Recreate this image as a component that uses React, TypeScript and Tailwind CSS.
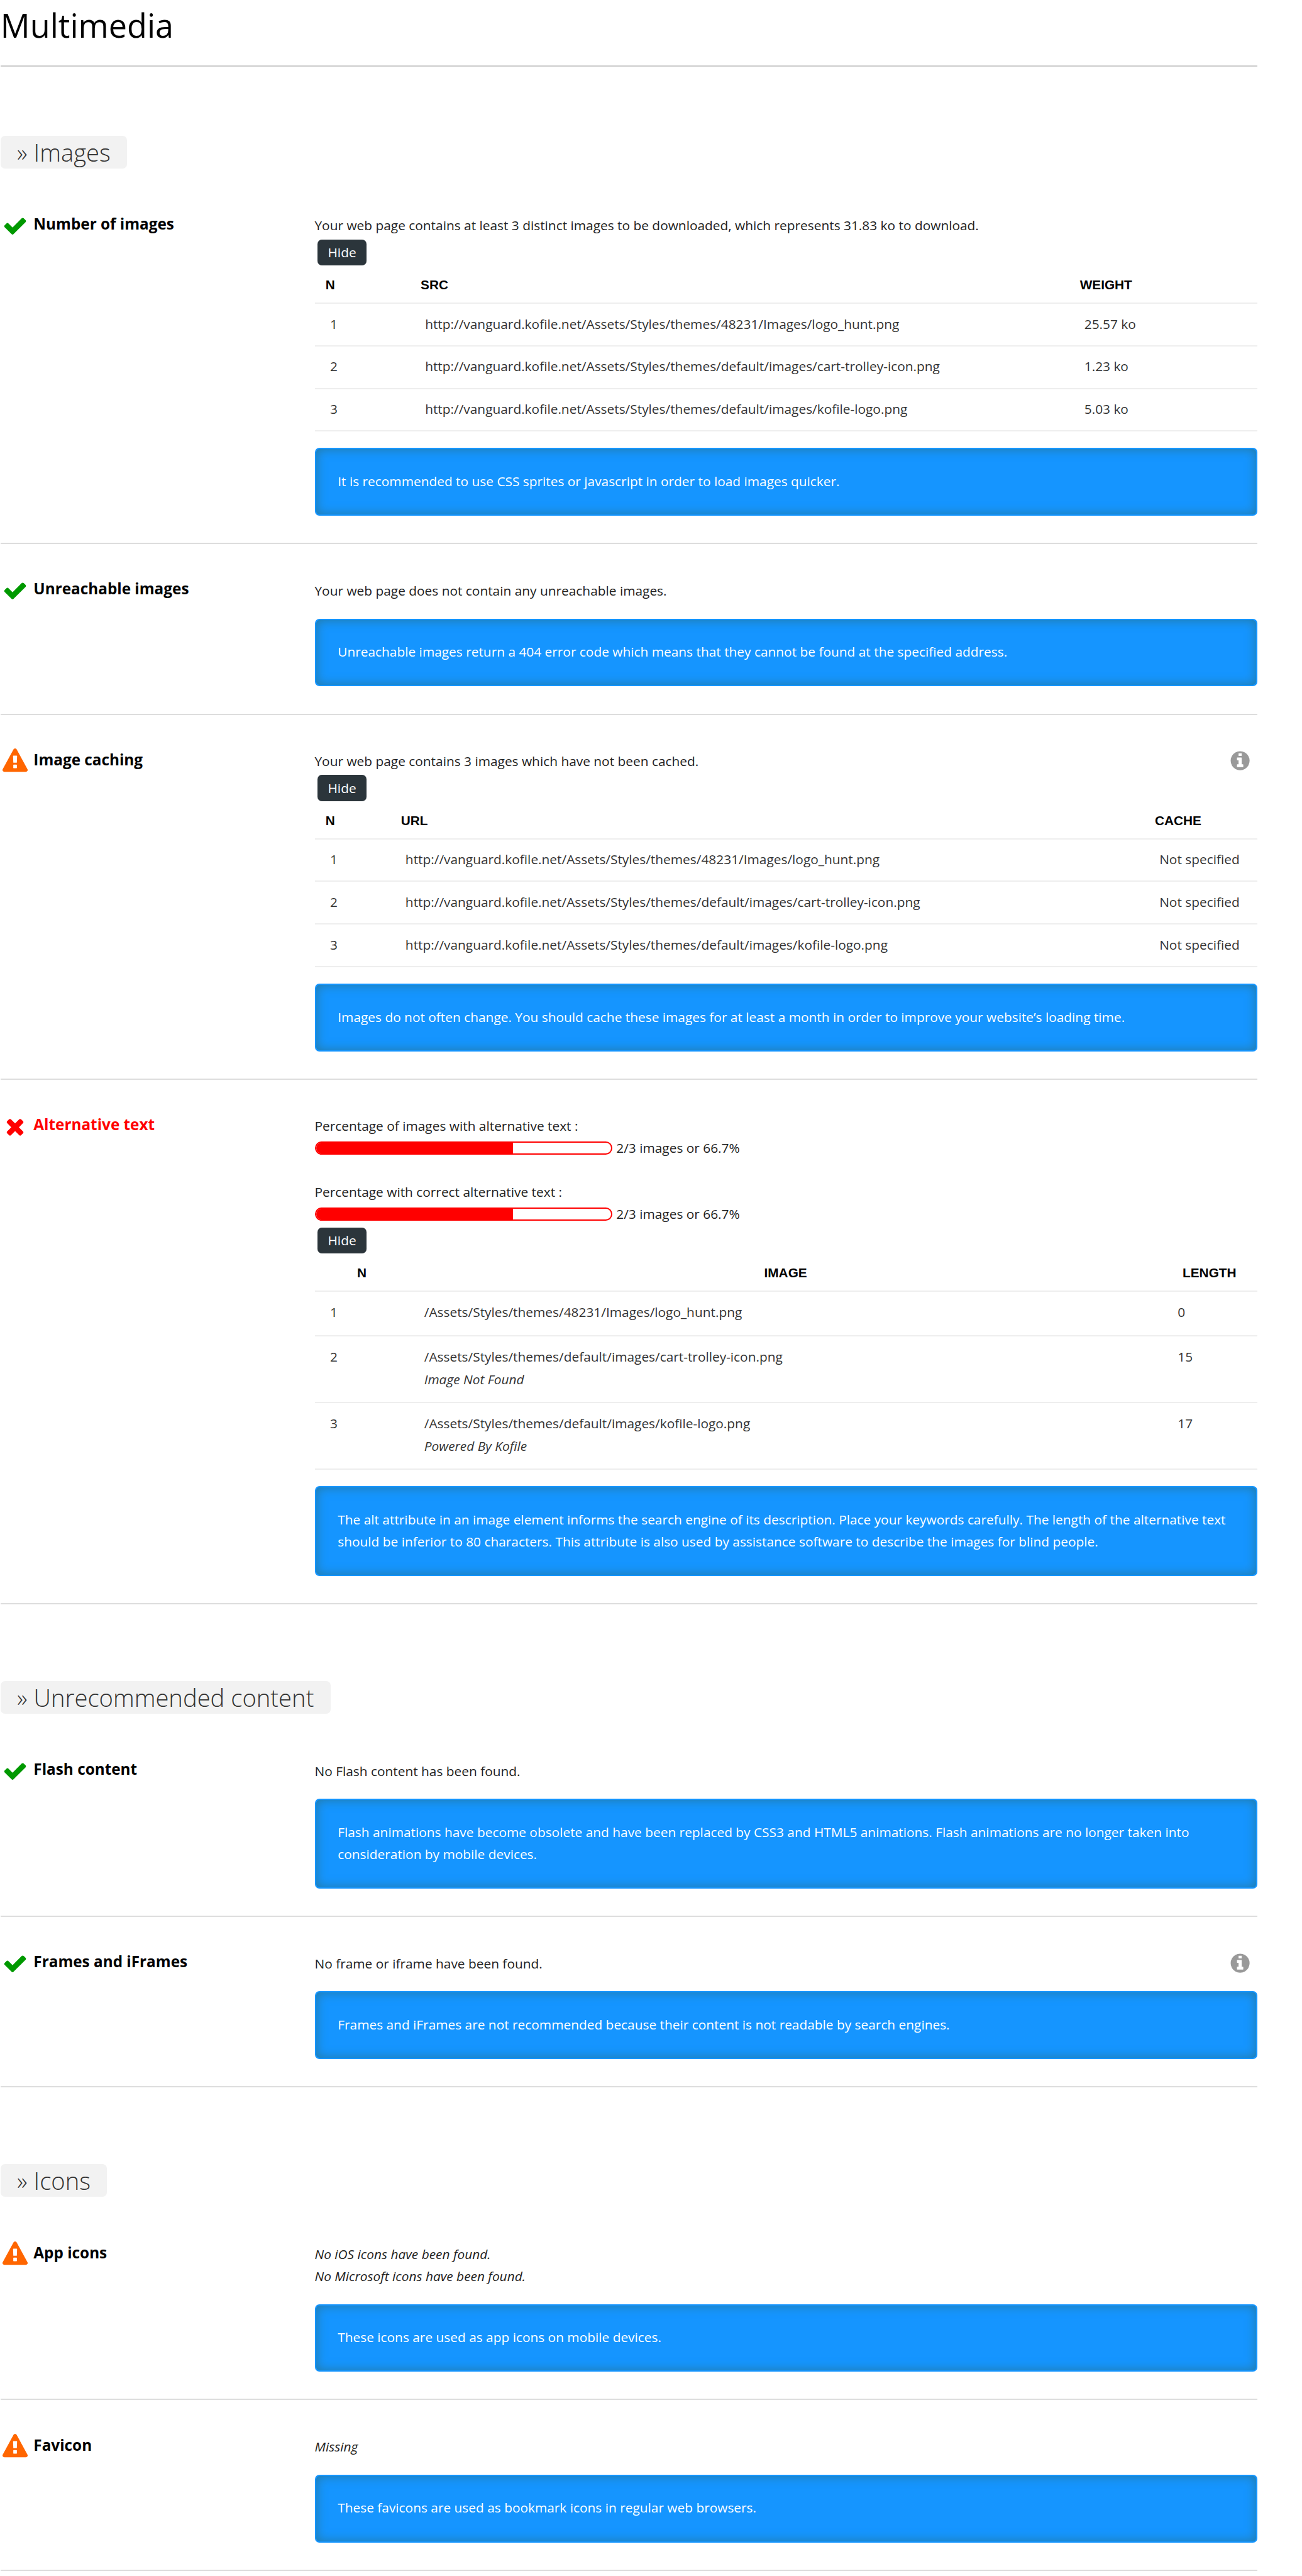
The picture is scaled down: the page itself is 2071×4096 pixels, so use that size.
import React from "react";

type Status = "ok" | "warn" | "bad";

const CHECK =
  "M1671 566q0 40-28 68l-724 724-136 136q-28 28-68 28t-68-28l-136-136-362-362q-28-28-28-68t28-68l136-136q28-28 68-28t68 28l294 295 656-657q28-28 68-28t68 28l136 136q28 28 28 68z";
const CROSS =
  "M1490 1322q0 40-28 68l-136 136q-28 28-68 28t-68-28l-294-294-294 294q-28 28-68 28t-68-28l-136-136q-28-28-28-68t28-68l294-294-294-294q-28-28-28-68t28-68l136-136q28-28 68-28t68 28l294 294 294-294q28-28 68-28t68 28l136 136q28 28 28 68t-28 68l-294 294 294 294q28 28 28 68z";
const WARNING =
  "M1024 1375v-190q0-14-9.5-23.5t-22.5-9.5h-192q-13 0-22.5 9.5t-9.5 23.5v190q0 14 9.5 23.5t22.5 9.5h192q13 0 22.5-9.5t9.5-23.5zm-2-374l18-459q0-12-10-19-13-11-24-11h-220q-11 0-24 11-10 7-10 21l17 457q0 10 10 16.5t24 6.5h185q14 0 23.5-6.5t10.5-16.5zm-14-934l768 1408q35 63-2 126-17 29-46.5 46t-63.5 17h-1536q-34 0-63.5-17t-46.5-46q-37-63-2-126l768-1408q17-31 47-49t65-18 65 18 47 49z";
const INFO =
  "M1152 1376v-160q0-14-9-23t-23-9h-96v-512q0-14-9-23t-23-9h-320q-14 0-23 9t-9 23v160q0 14 9 23t23 9h96v320h-96q-14 0-23 9t-9 23v160q0 14 9 23t23 9h448q14 0 23-9t9-23zm-128-896v-160q0-14-9-23t-23-9h-192q-14 0-23 9t-9 23v160q0 14 9 23t23 9h192q14 0 23-9t9-23zm640 416q0 209-103 385.5t-279.5 279.5-385.5 103-385.5-103-279.5-279.5-103-385.5 103-385.5 279.5-279.5 385.5-103 385.5 103 279.5 279.5 103 385.5z";

const STATUS: Record<Status, { path: string; color: string; label: string }> = {
  ok: { path: CHECK, color: "text-[#090]", label: "text-black" },
  warn: { path: WARNING, color: "text-[#f60]", label: "text-black" },
  bad: { path: CROSS, color: "text-[#f00]", label: "text-[#f00]" },
};

function Icon({ path, className }: { path: string; className: string }) {
  return (
    <svg viewBox="0 0 1792 1792" fill="currentColor" className={className}>
      <path d={path} />
    </svg>
  );
}

function SectionTitle({ children }: { children: React.ReactNode }) {
  return (
    <h2 className="mb-[17.4px] flex h-[52.1px] w-fit items-center rounded-[7px] bg-[#f2f2f2] px-[26.2px] text-[38.2px] font-light leading-[52px] text-[#333]">
      {children}
    </h2>
  );
}

function Tip({ children }: { children: React.ReactNode }) {
  return (
    <div className="rounded-[7px] border-2 border-[#1595ff] bg-[#1595ff] pb-[35.5px] pl-[33.8px] pr-[34.5px] pt-[33.5px] text-white shadow-[inset_0_0_17px_rgb(36,121,161)]">
      {children}
    </div>
  );
}

function Item({
  status,
  label,
  info = false,
  children,
}: {
  status: Status;
  label: string;
  info?: boolean;
  children: React.ReactNode;
}) {
  const s = STATUS[status];
  return (
    <section className="flex border-b-2 border-[#ddd] pb-[43.2px]">
      <div className="flex w-[500.6px] shrink-0 items-start pl-[3.5px] pt-[53.6px]">
        <Icon path={s.path} className={"size-[40px] shrink-0 " + s.color} />
        <h3 className={"ml-[9px] mt-[-0.5px] text-[24.3px] font-bold leading-[36px] " + s.label}>{label}</h3>
      </div>
      <div className="relative flex-1 pt-[56.5px]">
        {info && <Icon path={INFO} className="absolute right-[9.3px] top-[55.6px] size-[35.2px] text-[#999]" />}
        {children}
      </div>
    </section>
  );
}

function Summary({ italic = false, children }: { italic?: boolean; children: React.ReactNode }) {
  return <div className={italic ? "mb-[27px] -ml-px italic" : "mb-[27px] -ml-px"}>{children}</div>;
}

function Line({ children }: { children: React.ReactNode }) {
  return <p className="-ml-px">{children}</p>;
}

function HideButton() {
  return (
    <button className="ml-[3.5px] mt-[4.3px] flex h-[41.7px] w-[78.2px] items-center justify-center rounded-[7px] bg-[#2b353b] text-white">
      Hide
    </button>
  );
}

function Table({
  cols,
  head,
  rows,
  centered = false,
}: {
  cols: string;
  head: string[];
  rows: { cells: string[]; note?: string; height: string }[];
  centered?: boolean;
}) {
  return (
    <div className="mb-[26.1px] text-[#333]">
      <div
        className={
          "grid h-[60.8px] items-start border-b-2 border-[#eee] pt-[13.9px] font-['Liberation_Sans',Arial,sans-serif] text-[20.8px] font-bold text-black " +
          cols
        }
      >
        {head.map((h) => (
          <div key={h} className={centered ? "pr-[1.8px] text-center" : "pl-[16.4px]"}>
            {h}
          </div>
        ))}
      </div>
      {rows.map((r) => (
        <div key={r.cells[0]} className={"grid items-start border-b-2 border-[#eee] pt-[14.6px] " + cols + " " + r.height}>
          {r.cells.map((c, i) => (
            <div key={i} className="pl-[23.5px]">
              {c}
              {i === 1 && r.note && <div className="mt-[1.7px] italic">{r.note}</div>}
            </div>
          ))}
        </div>
      ))}
    </div>
  );
}

function Progress() {
  return (
    <div className="flex items-center">
      <div className="mt-[0.5px] h-[20.9px] w-[472.8px] overflow-hidden rounded-[10.4px] border-2 border-[#f00]">
        <div className="h-full w-[66.7%] bg-[#f00]" />
      </div>
      <span className="ml-[6px]">2/3 images or 66.7%</span>
    </div>
  );
}

const BASE = "http://vanguard.kofile.net";
const IMAGES = [
  "/Assets/Styles/themes/48231/Images/logo_hunt.png",
  "/Assets/Styles/themes/default/images/cart-trolley-icon.png",
  "/Assets/Styles/themes/default/images/kofile-logo.png",
];
const WEIGHTS = ["25.57 ko", "1.23 ko", "5.03 ko"];
const LENGTHS = ["0", "15", "17"];
const NOTES = [undefined, "Image Not Found", "Powered By Kofile"];
const ROW = "h-[67.78px]";

export default function App() {
  return (
    <main className="h-[4096px] w-[2071px] overflow-hidden bg-white font-['Open_Sans',sans-serif] text-[20.86px] leading-[34.76px] text-[#222]">
      <div className="ml-[0.87px] w-[1998.8px]">
        <h1 className="flex h-[106px] items-start border-b-2 border-[#ccc] pt-[3.8px] text-[52.1px] leading-[71px] text-black">
          Multimedia
        </h1>

        <div className="mt-[109.5px]">
          <SectionTitle>» Images</SectionTitle>
          <Item status="ok" label="Number of images">
            <Line>
              Your web page contains at least 3 distinct images to be downloaded, which represents 31.83 ko to download.
            </Line>
            <HideButton />
            <Table
              cols="grid-cols-[151.2px_1048.6px_1fr]"
              head={["N", "SRC", "WEIGHT"]}
              rows={IMAGES.map((p, i) => ({ cells: [String(i + 1), BASE + p, WEIGHTS[i]], height: ROW }))}
            />
            <Tip>It is recommended to use CSS sprites or javascript in order to load images quicker.</Tip>
          </Item>
          <Item status="ok" label="Unreachable images">
            <Summary>Your web page does not contain any unreachable images.</Summary>
            <Tip>Unreachable images return a 404 error code which means that they cannot be found at the specified address.</Tip>
          </Item>
          <Item status="warn" label="Image caching" info>
            <Line>Your web page contains 3 images which have not been cached.</Line>
            <HideButton />
            <Table
              cols="grid-cols-[119.9px_1199.3px_1fr]"
              head={["N", "URL", "CACHE"]}
              rows={IMAGES.map((p, i) => ({ cells: [String(i + 1), BASE + p, "Not specified"], height: ROW }))}
            />
            <Tip>
              Images do not often change. You should cache these images for at least a month in order to improve your
              website’s loading time.
            </Tip>
          </Item>
          <Item status="bad" label="Alternative text">
            <Line>Percentage of images with alternative text :</Line>
            <Progress />
            <div className="mt-[34.76px]">
              <Line>Percentage with correct alternative text :</Line>
            </div>
            <Progress />
            <HideButton />
            <Table
              centered
              cols="grid-cols-[149.8px_1198.5px_1fr]"
              head={["N", "IMAGE", "LENGTH"]}
              rows={IMAGES.map((p, i) => ({
                cells: [String(i + 1), p, LENGTHS[i]],
                note: NOTES[i],
                height: i === 0 ? "h-[71.26px]" : "h-[106px]",
              }))}
            />
            <Tip>
              The alt attribute in an image element informs the search engine of its description. Place your keywords
              carefully. The length of the alternative text should be inferior to 80 characters. This attribute is also
              used by assistance software to describe the images for blind people.
            </Tip>
          </Item>
        </div>

        <div className="mt-[121.6px]">
          <SectionTitle>» Unrecommended content</SectionTitle>
          <Item status="ok" label="Flash content">
            <Summary>No Flash content has been found.</Summary>
            <Tip>
              Flash animations have become obsolete and have been replaced by CSS3 and HTML5 animations. Flash animations
              are no longer taken into consideration by mobile devices.
            </Tip>
          </Item>
          <Item status="ok" label="Frames and iFrames" info>
            <Summary>No frame or iframe have been found.</Summary>
            <Tip>Frames and iFrames are not recommended because their content is not readable by search engines.</Tip>
          </Item>
        </div>

        <div className="mt-[121.6px]">
          <SectionTitle>» Icons</SectionTitle>
          <Item status="warn" label="App icons">
            <Summary italic>
              <p>No iOS icons have been found.</p>
              <p>No Microsoft icons have been found.</p>
            </Summary>
            <Tip>These icons are used as app icons on mobile devices.</Tip>
          </Item>
          <Item status="warn" label="Favicon">
            <Summary italic>Missing</Summary>
            <Tip>These favicons are used as bookmark icons in regular web browsers.</Tip>
          </Item>
        </div>
      </div>
    </main>
  );
}
